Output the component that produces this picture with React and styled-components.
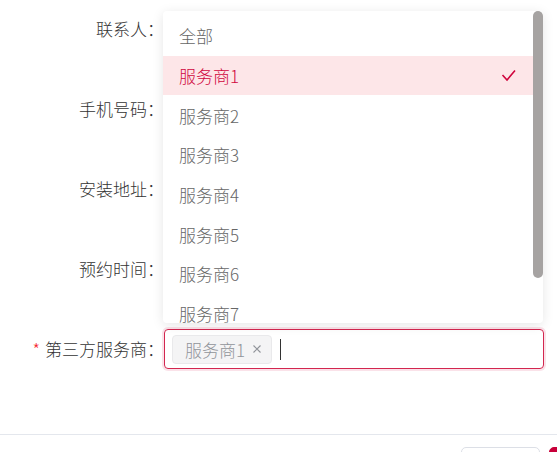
import React from "react";
import styled, { createGlobalStyle } from "styled-components";

const Global = createGlobalStyle`
  html, body { margin: 0; padding: 0; background: #fff; overflow: hidden; }
  body { font-family: "Noto Sans CJK SC", "Noto Sans", sans-serif; }
`;

const Page = styled.div`
  position: relative;
  width: 650px;
  height: 452px;
  overflow: hidden;
  background: #fff;
`;

const Form = styled.div`
  display: flex;
  flex-direction: column;
  gap: 40px;
  padding-top: 9px;
  height: 434px;
  box-sizing: border-box;
`;

const Row = styled.div`
  display: flex;
  align-items: center;
  height: 40px;
`;

const Label = styled.div`
  width: 164px;
  box-sizing: border-box;
  padding-right: 0px;
  text-align: right;
  font-size: 17px;
  font-weight: 300;
  color: #333;
  line-height: 40px;
  white-space: nowrap;
`;

const Star = styled.span`
  color: #f5222d;
  margin-right: 5px;
`;

const SelectBox = styled.div`
  width: 380px;
  height: 40px;
  box-sizing: border-box;
  border: 1px solid #d3264f;
  border-radius: 4px;
  box-shadow: 0 0 0 2px rgba(214, 20, 70, 0.12);
  display: flex;
  align-items: center;
  padding-left: 7px;
  gap: 8px;
`;

const Tag = styled.span`
  display: inline-flex;
  align-items: center;
  height: 29px;
  box-sizing: border-box;
  padding: 0 9px 0 12px;
  background: #f4f4f5;
  border: 1px solid #e9e9eb;
  border-radius: 4px;
  font-size: 17px;
  font-weight: 300;
  color: #909399;
  gap: 7px;
`;

const Caret = styled.span`
  width: 1px;
  height: 21px;
  background: #333;
`;

const Footer = styled.div`
  border-top: 1px solid #e4e7ed;
  display: flex;
  justify-content: flex-end;
  gap: 9px;
  padding: 12px 21px 0 0;
`;

const Button = styled.div`
  width: ${(p) => (p.$primary ? "80px" : "79px")};
  height: 40px;
  box-sizing: border-box;
  border-radius: 5px;
  border: 1px solid ${(p) => (p.$primary ? "#c8003a" : "#dcdfe6")};
  background: ${(p) => (p.$primary ? "#c8003a" : "#fff")};
  color: ${(p) => (p.$primary ? "#fff" : "#606266")};
  font-size: 14px;
  display: flex;
  align-items: center;
  justify-content: center;
`;

const Panel = styled.div`
  position: absolute;
  left: 163px;
  top: 11px;
  width: 380px;
  height: 312px;
  background: #fff;
  border-radius: 4px;
  box-shadow: 0 2px 12px rgba(0, 0, 0, 0.1);
  overflow: hidden;
`;

const List = styled.ul`
  list-style: none;
  margin: 0;
  padding: 5px 0 0;
`;

const Item = styled.li`
  height: 39.7px;
  display: flex;
  align-items: center;
  justify-content: space-between;
  padding: 0 26px 0 16px;
  font-size: 17px;
  font-weight: 300;
  color: ${(p) => (p.$selected ? "#d0053d" : "#666")};
  background: ${(p) => (p.$selected ? "#fde6e8" : "transparent")};
`;

const Thumb = styled.div`
  position: absolute;
  right: 0;
  top: 0;
  width: 10px;
  height: 267px;
  border-radius: 5px;
  background: #a6a3a2;
`;

const Check = () => (
  <svg width="16" height="14" viewBox="0 0 16 14">
    <polyline points="1.5,6 6,11 14,1.5" fill="none" stroke="#d0053d" strokeWidth="1.6" />
  </svg>
);

const Close = () => (
  <svg width="10" height="10" viewBox="0 0 10 10">
    <path d="M1.5 1.5 L8.5 8.5 M8.5 1.5 L1.5 8.5" stroke="#909399" strokeWidth="1.1" />
  </svg>
);

const options = ["全部", "服务商1", "服务商2", "服务商3", "服务商4", "服务商5", "服务商6", "服务商7", "服务商8"];

export default function App() {
  return (
    <Page>
      <Global />
      <Form>
        <Row><Label>联系人：</Label></Row>
        <Row><Label>手机号码：</Label></Row>
        <Row><Label>安装地址：</Label></Row>
        <Row><Label>预约时间：</Label></Row>
        <Row>
          <Label><Star>*</Star>第三方服务商：</Label>
          <SelectBox>
            <Tag>服务商1<Close /></Tag>
            <Caret />
          </SelectBox>
        </Row>
      </Form>
      <Footer>
        <Button>取消</Button>
        <Button $primary>确定</Button>
      </Footer>
      <Panel>
        <List>
          {options.map((o) => (
            <Item key={o} $selected={o === "服务商1"}>
              {o}
              {o === "服务商1" && <Check />}
            </Item>
          ))}
        </List>
        <Thumb />
      </Panel>
    </Page>
  );
}
